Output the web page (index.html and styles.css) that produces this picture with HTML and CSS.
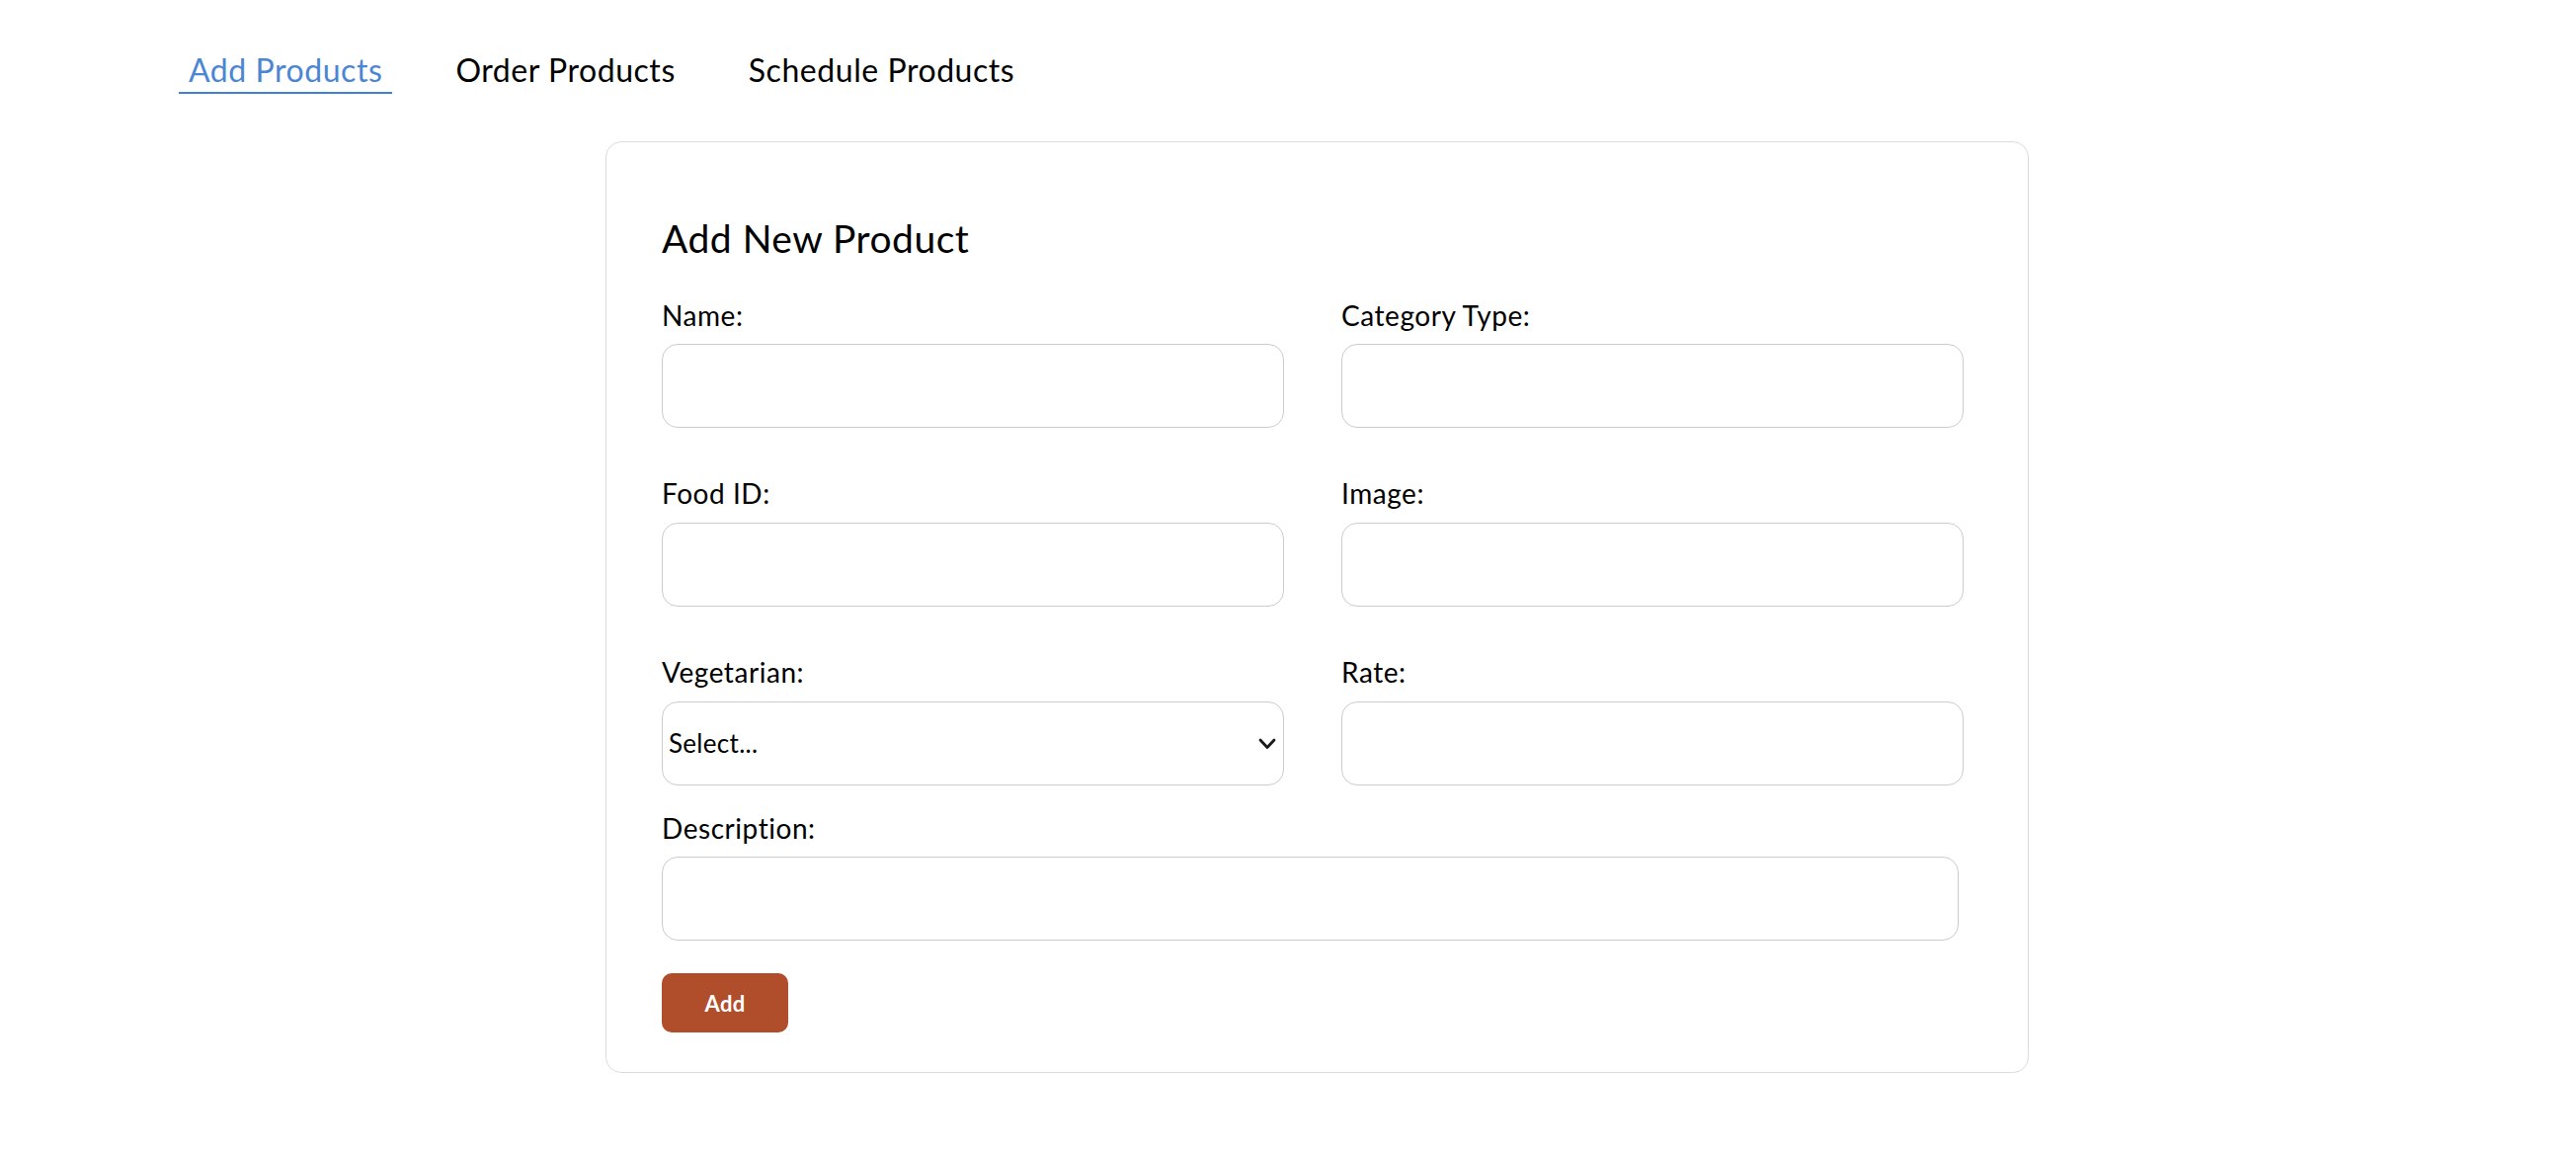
FILE: index.html
```html
<!DOCTYPE html>
<html lang="en">
<head>
<meta charset="utf-8">
<title>Add Products</title>
<link rel="stylesheet" href="styles.css">
</head>
<body>
  <nav class="tabs">
    <a class="tab tab-active" href="#">Add Products</a>
    <a class="tab" href="#">Order Products</a>
    <a class="tab" href="#">Schedule Products</a>
  </nav>

  <section class="card">
    <h2 class="card-title">Add New Product</h2>
    <form class="form">
      <div class="grid">
        <div class="field">
          <label class="label">Name:</label>
          <input class="input" type="text">
        </div>
        <div class="field">
          <label class="label">Category Type:</label>
          <input class="input" type="text">
        </div>
        <div class="field">
          <label class="label">Food ID:</label>
          <input class="input" type="text">
        </div>
        <div class="field">
          <label class="label">Image:</label>
          <input class="input" type="text">
        </div>
        <div class="field">
          <label class="label">Vegetarian:</label>
          <div class="select-wrap">
            <select class="input select">
              <option>Select...</option>
              <option>Yes</option>
              <option>No</option>
            </select>
            <svg class="chevron" width="18" height="12" viewBox="0 0 18 12"><path d="M2 2 L9 9.5 L16 2" fill="none" stroke="#1a1a1a" stroke-width="2.8" stroke-linecap="round" stroke-linejoin="round"/></svg>
          </div>
        </div>
        <div class="field">
          <label class="label">Rate:</label>
          <input class="input" type="text">
        </div>
      </div>
      <div class="field field-desc">
        <label class="label">Description:</label>
        <input class="input input-desc" type="text">
      </div>
      <button class="btn" type="button">Add</button>
    </form>
  </section>
</body>
</html>
```

FILE: styles.css
```css
* { box-sizing: border-box; }

body {
  margin: 8px;
  background: #ffffff;
  font-family: Lato, "Noto Sans", "Liberation Sans", sans-serif;
  color: #000;
}

.tabs {
  display: flex;
  gap: 54px;
  padding-left: 173px;
  padding-top: 41px;
}

.tab {
  font-size: 32px;
  line-height: 44px;
  letter-spacing: 0.55px;
  padding: 0 10px;
  color: #000;
  text-decoration: none;
  border-bottom: 2px solid transparent;
}

.tab-active {
  color: #4a86d4;
  border-bottom-color: #3f80d8;
}

.card {
  width: 1441px;
  margin: 48px 0 0 605px;
  border: 1px solid #dcdcdc;
  border-radius: 16px;
  padding: 74px 64px 40px 56px;
}

.card-title {
  margin: 0;
  font-size: 39px;
  font-weight: 400;
  line-height: 1.2;
  letter-spacing: 0.5px;
}

.form {
  margin-top: 38px;
}

.grid {
  display: grid;
  grid-template-columns: 630px 630px;
  column-gap: 58px;
  row-gap: 50px;
}

.field {
  display: flex;
  flex-direction: column;
  gap: 12px;
}

.field-desc {
  margin-top: 27px;
}

.label {
  font-size: 28px;
  line-height: 1.2;
  letter-spacing: 0.55px;
}

.input {
  width: 100%;
  height: 85px;
  border: 1px solid #cccccc;
  border-radius: 16px;
  background: #fff;
  font-family: inherit;
  font-size: 26px;
  letter-spacing: 0.3px;
  padding: 0 6px;
  outline: none;
}

.input-desc {
  width: 1313px;
}

.select-wrap {
  position: relative;
}

.select {
  appearance: none;
  -webkit-appearance: none;
  color: #000;
}

.chevron {
  position: absolute;
  right: 8px;
  top: 37px;
  pointer-events: none;
}

.btn {
  margin-top: 33px;
  width: 128px;
  height: 60px;
  border: none;
  border-radius: 10px;
  background: #b04e2b;
  color: #fff;
  font-family: inherit;
  font-size: 22px;
  font-weight: 700;
  letter-spacing: 0.3px;
}
```
